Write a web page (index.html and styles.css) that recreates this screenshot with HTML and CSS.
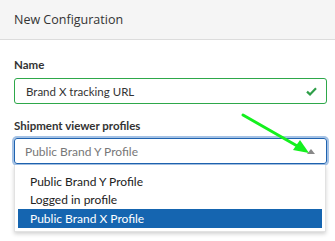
FILE: index.html
```html
<!DOCTYPE html>
<html>
<head>
<meta charset="utf-8">
<link rel="stylesheet" href="styles.css">
</head>
<body>
<div class="page">
  <div class="header">New Configuration</div>
  <div class="content">
    <div class="field">
      <div class="label">Name</div>
      <div class="input valid">
        <span class="value">Brand X tracking URL</span>
        <svg class="check" width="11" height="9" viewBox="0 0 11 9"><path d="M1 4.6 L4 7.4 L10 1.2" fill="none" stroke="#2e9e48" stroke-width="2.2"/></svg>
      </div>
    </div>
    <div class="field second">
      <div class="label">Shipment viewer profiles</div>
      <div class="select-wrap">
        <div class="input select">
          <span class="placeholder">Public Brand Y Profile</span>
          <span class="caret"></span>
        </div>
        <ul class="menu">
          <li class="option">Public Brand Y Profile</li>
          <li class="option">Logged in profile</li>
          <li class="option active">Public Brand X Profile</li>
        </ul>
      </div>
    </div>
  </div>
  <svg class="annot" width="335" height="241" viewBox="0 0 335 241">
    <line x1="243" y1="115" x2="299" y2="147" stroke="#14f01e" stroke-width="3" stroke-linecap="round"/>
    <path d="M309 153 L293 150 L300 140 Z" fill="#14f01e"/>
  </svg>
</div>
</body>
</html>
```

FILE: styles.css
```css
html, body {
  margin: 0;
  padding: 0;
  background: #ffffff;
}
body {
  font-family: Lato, "Open Sans", sans-serif;
  color: #333;
}
.page {
  position: relative;
  width: 335px;
  height: 241px;
  overflow: hidden;
}
.header {
  box-sizing: border-box;
  height: 40px;
  background: #f5f5f5;
  border-bottom: 1px solid #dcdcdc;
  display: flex;
  align-items: center;
  padding-left: 14px;
  font-family: "Open Sans", sans-serif;
  font-size: 12.5px;
  color: #333;
}
.content {
  padding: 17px 8px 0 14px;
}
.label {
  font-size: 11.5px;
  font-weight: 700;
  line-height: 16px;
  color: #333;
  margin-bottom: 5px;
}
.field.second {
  margin-top: 14px;
}
.second .label {
  margin-bottom: 4px;
}
.input {
  height: 26px;
  box-sizing: border-box;
  border: 1px solid #ccc;
  border-radius: 3px;
  display: flex;
  align-items: center;
  padding: 0 8px 0 11px;
  font-size: 11.5px;
}
.input.valid {
  border-color: #2ea84a;
}
.value {
  flex: 1;
  color: #333;
}
.check {
  margin-right: 1px;
}
.select-wrap {
  position: relative;
}
.select {
  border-color: #1f63b0;
  box-shadow: 0 0 0 2px #a5c2e5;
  padding-left: 10px;
  font-size: 12px;
}
.placeholder {
  flex: 1;
  color: #777;
}
.caret {
  width: 0;
  height: 0;
  border-left: 4px solid transparent;
  border-right: 4px solid transparent;
  border-bottom: 5px solid #888;
  margin-right: 3px;
  margin-top: 1px;
}
.menu {
  position: absolute;
  left: 0;
  right: 1px;
  top: 27px;
  margin: 0;
  padding: 7px 3px 3px 3px;
  list-style: none;
  background: #fff;
  border: 1px solid #e2e2e2;
  border-top: none;
  box-shadow: 0 2px 4px rgba(0,0,0,0.18);
}
.option {
  height: 19px;
  line-height: 19px;
  padding-left: 12px;
  font-size: 12px;
  color: #222;
  margin-top: -0.5px;
}
.option.active {
  background: #1565b0;
  color: #fff;
}
.annot {
  position: absolute;
  left: 0;
  top: 0;
  pointer-events: none;
}
```
